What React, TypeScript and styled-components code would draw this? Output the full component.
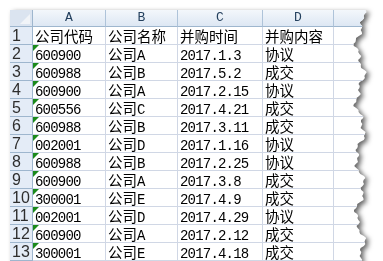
import React from "react";
import styled, { createGlobalStyle } from "styled-components";

const GlobalStyle = createGlobalStyle`
  html, body {
    margin: 0;
    padding: 0;
    background: #ffffff;
    overflow: hidden;
  }
  #root {
    padding: 10px 0 0 10px;
  }
`;

type Row = [string, string, string, string];

const header: Row = ["公司代码", "公司名称", "并购时间", "并购内容"];
const rows: Row[] = [
  ["600900", "公司A", "2017.1.3", "协议"],
  ["600988", "公司B", "2017.5.2", "成交"],
  ["600900", "公司A", "2017.2.15", "协议"],
  ["600556", "公司C", "2017.4.21", "成交"],
  ["600988", "公司B", "2017.3.11", "成交"],
  ["002001", "公司D", "2017.1.16", "协议"],
  ["600988", "公司B", "2017.2.25", "协议"],
  ["600900", "公司A", "2017.3.8", "成交"],
  ["300001", "公司E", "2017.4.9", "成交"],
  ["002001", "公司D", "2017.4.29", "协议"],
  ["600900", "公司A", "2017.2.12", "成交"],
  ["300001", "公司E", "2017.4.18", "成交"],
];

const SHEET_W = 360;
const SHEET_H = 251;

function tornPath(): string {
  const pts: string[] = ["0px 0px"];
  const step = 2;
  for (let y = 0; y <= SHEET_H + 4; y += step) {
    const x =
      350 +
      3.8 * Math.sin(y / 9 + 0.8) +
      2.2 * Math.sin(y / 3.3 + 1) +
      1.3 * Math.sin(y / 1.2 + 0.5);
    pts.push(`${x.toFixed(1)}px ${y}px`);
  }
  pts.push(`0px ${SHEET_H + 4}px`);
  return `polygon(${pts.join(", ")})`;
}

const TORN = tornPath();

const Shadow = styled.div`
  width: ${SHEET_W}px;
  filter: drop-shadow(3px 2px 2.5px rgba(0, 0, 0, 0.6));
`;

const Sheet = styled.div`
  width: ${SHEET_W}px;
  height: ${SHEET_H + 4}px;
  background: #ffffff;
  clip-path: ${TORN};
  display: grid;
  grid-template-columns: 23px 73px 72px 85px 71px 1fr;
  grid-template-rows: 17px repeat(13, 18px);
  align-content: start;
`;

const Corner = styled.div`
  position: relative;
  background: #dbe4f0;
  border-right: 1px solid #9eb6ce;
  border-bottom: 1px solid #9eb6ce;
  box-sizing: border-box;
  &::after {
    content: "";
    position: absolute;
    right: 2px;
    bottom: 2px;
    width: 0;
    height: 0;
    border-left: 10px solid transparent;
    border-bottom: 10px solid #f1f4f8;
  }
`;

const ColHead = styled.div`
  box-sizing: border-box;
  background: linear-gradient(#f3f7fb, #dde7f3);
  border-right: 1px solid #aec3d9;
  border-bottom: 1px solid #9eb6ce;
  text-align: center;
  font-family: "Liberation Mono", monospace;
  font-size: 13px;
  color: #24405e;
  line-height: 16px;
`;

const RowHead = styled.div`
  box-sizing: border-box;
  background: #e4ecf7;
  border-right: 1px solid #9eb6ce;
  border-bottom: 1px solid #9eb6ce;
  padding: 1px 0 0 2px;
  font-family: "Liberation Sans", sans-serif;
  font-size: 16px;
  color: #2e2e2e;
  line-height: 16px;
`;

const Cell = styled.div<{ $flag?: boolean }>`
  position: relative;
  box-sizing: border-box;
  border-right: 1px solid #d0d7e5;
  border-bottom: 1px solid #d0d7e5;
  padding: 0 0 0 2px;
  font-family: "Noto Sans CJK SC", sans-serif;
  font-size: 14.5px;
  color: #000000;
  white-space: nowrap;
  line-height: 17px;
  &::before {
    content: "";
    display: ${(p) => (p.$flag ? "block" : "none")};
    position: absolute;
    left: 0;
    top: 0;
    width: 0;
    height: 0;
    border-top: 6px solid #1b8a1b;
    border-right: 6px solid transparent;
  }
`;

const Latin = styled.span`
  font-family: "Liberation Mono", monospace;
  font-size: 14px;
  letter-spacing: -0.8px;
`;

function renderText(text: string) {
  return text
    .split(/([\x00-\x7F]+)/)
    .filter((s) => s.length > 0)
    .map((part, i) =>
      /^[\x00-\x7F]+$/.test(part) ? (
        <Latin key={i}>{part}</Latin>
      ) : (
        <span key={i}>{part}</span>
      )
    );
}

export default function App() {
  const all: Row[] = [header, ...rows];
  return (
    <>
      <GlobalStyle />
      <Shadow>
        <Sheet>
          <Corner />
          {["A", "B", "C", "D", ""].map((c, i) => (
            <ColHead key={i}>{c}</ColHead>
          ))}
          {all.map((r, ri) => (
            <React.Fragment key={ri}>
              <RowHead>{ri + 1}</RowHead>
              {r.map((v, ci) => (
                <Cell key={ci} $flag={ci === 0 && ri > 0}>
                  {renderText(v)}
                </Cell>
              ))}
              <Cell />
            </React.Fragment>
          ))}
        </Sheet>
      </Shadow>
    </>
  );
}
